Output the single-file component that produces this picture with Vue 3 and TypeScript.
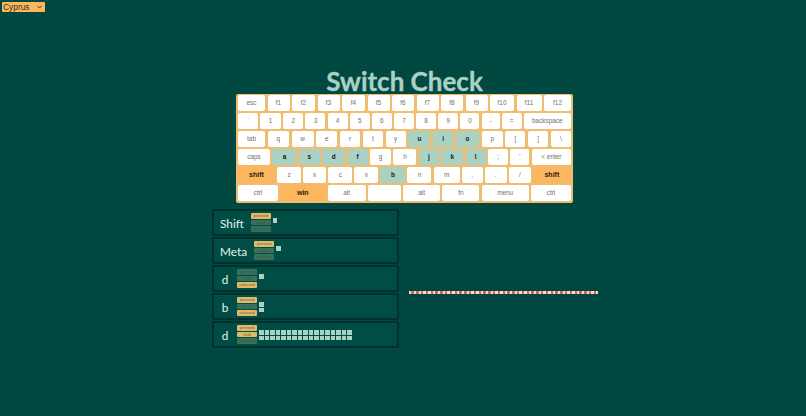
<script setup lang="ts">
interface Key { t: string; w: number; s?: 'on' | 'mod' }
const k = (t: string, w: number, s?: 'on' | 'mod'): Key => ({ t, w, s })
const keyRows: Key[][] = [
  [k('esc', 27), k('f1', 22), k('f2', 23), k('f3', 22), k('f4', 23), k('f5', 22), k('f6', 22), k('f7', 22), k('f8', 22), k('f9', 22), k('f10', 24), k('f11', 25), k('f12', 27)],
  [k('`', 20), k('1', 21), k('2', 20), k('3', 20), k('4', 20), k('5', 20), k('6', 20), k('7', 20), k('8', 20), k('9', 20), k('0', 19), k('-', 18), k('=', 20), k('backspace', 47)],
  [k('tab', 27), k('q', 21), k('w', 22), k('e', 21), k('r', 20), k('t', 20), k('y', 20), k('u', 22, 'on'), k('i', 20, 'on'), k('o', 23, 'on'), k('p', 21), k('[', 20), k(']', 20), k('\\', 20)],
  [k('caps', 32), k('a', 24, 'on'), k('s', 21, 'on'), k('d', 23, 'on'), k('f', 20, 'on'), k('g', 21), k('h', 23), k('j', 20, 'on'), k('k', 22, 'on'), k('l', 20, 'on'), k(';', 20), k("'", 19), k('< enter', 39)],
  [k('shift', 37, 'mod'), k('z', 24), k('x', 23), k('c', 24), k('v', 24), k('b', 25, 'on'), k('n', 24), k('m', 26), k(',', 21), k('.', 22), k('/', 22), k('shift', 38, 'mod')],
  [k('ctrl', 40), k('win', 45, 'mod'), k('alt', 38), k('', 33), k('alt', 37), k('fn', 37), k('menu', 47), k('ctrl', 40)],
]

interface Ev { label: string; on: boolean[]; dots: number }
const events: Ev[] = [
  { label: 'Shift', on: [true, false, false], dots: 1 },
  { label: 'Meta', on: [true, false, false], dots: 1 },
  { label: 'd', on: [false, false, true], dots: 1 },
  { label: 'b', on: [true, false, true], dots: 2 },
  { label: 'd', on: [true, true, false], dots: 34 },
]
const states = ['pressed', 'held', 'released']
</script>

<template>
  <main class="page">
    <div class="picker">
      <select class="layout">
        <option>Cyprus</option>
      </select>
      <svg class="chev" width="5" height="4" viewBox="0 0 5 4"><path d="M.5 1 2.5 3 4.5 1" fill="none" stroke="#4a3a1c" stroke-width="1" /></svg>
    </div>
    <h1 class="title">Switch Check</h1>
    <section class="keyboard">
      <div v-for="(row, r) in keyRows" :key="r" class="key-row">
        <div
          v-for="(key, i) in row"
          :key="i"
          class="key"
          :class="key.s"
          :style="{ width: key.w + 'px' }"
        >{{ key.t }}</div>
      </div>
    </section>
    <section class="lower">
      <div class="events">
        <div v-for="(ev, i) in events" :key="i" class="event">
          <span class="label">{{ ev.label }}</span>
          <div class="stack">
            <span
              v-for="(s, j) in states"
              :key="s"
              class="state"
              :class="{ lit: ev.on[j] }"
            >{{ s }}</span>
          </div>
          <div class="dots">
            <i v-for="n in ev.dots" :key="n" class="dot"></i>
          </div>
        </div>
      </div>
      <div class="timing">
        <div class="line"></div>
      </div>
    </section>
  </main>
</template>

<style scoped>
.page {
  box-sizing: border-box;
  width: 806px;
  height: 416px;
  padding-left: 3px;
  background: #004840;
  overflow: hidden;
  display: flex;
  flex-direction: column;
  align-items: center;
}
.picker {
  align-self: flex-start;
  position: relative;
  margin: 2px 0 0 -1px;
  width: 43px;
  height: 10px;
}
.layout {
  display: block;
  appearance: none;
  width: 43px;
  height: 10px;
  padding: 0 0 0 1px;
  border: 0;
  border-radius: 1px;
  background-color: #fbb65e;
  color: #3a3320;
  font: 8.4px/10px "Liberation Sans", Arial, sans-serif;
}
.chev {
  position: absolute;
  right: 3px;
  top: 3px;
}
.title {
  margin: 56px 0 0;
  height: 26px;
  color: #a9d1c4;
  font: 700 26px/27px Lato, sans-serif;
  -webkit-text-stroke: 0.35px #a9d1c4;
  white-space: nowrap;
}
.keyboard {
  box-sizing: border-box;
  width: 337px;
  height: 109px;
  padding: 1px 2px 0;
  background: #efbd72;
  border-radius: 2px;
  display: flex;
  flex-direction: column;
  gap: 2px;
}
.key-row {
  display: flex;
  justify-content: space-between;
  height: 16px;
}
.key {
  background: #fff;
  border-radius: 2px;
  color: #707070;
  font: 6.4px/16px "Liberation Sans", Arial, sans-serif;
  text-align: center;
  white-space: nowrap;
}
.key.on {
  background: #a9d1c4;
  color: #10201c;
  font-weight: 700;
}
.key.mod {
  background: #fbb65e;
  color: #2a2010;
  font-weight: 700;
  font-size: 7px;
}
.lower {
  display: flex;
  gap: 10px;
  width: 386px;
  margin: 6px 0 0 1px;
}
.events {
  width: 187px;
  flex: none;
  display: flex;
  flex-direction: column;
  gap: 1px;
}
.event {
  box-sizing: border-box;
  height: 27px;
  display: flex;
  align-items: center;
  gap: 6px;
  padding-left: 5px;
  border: 2px solid #00312c;
  border-radius: 2px;
  background: #004d45;
}
.label {
  min-width: 10px;
  padding: 2px 1px 0;
  color: #e4f3ee;
  font: 11.8px/1 Lato, sans-serif;
  text-align: center;
}
.stack {
  width: 20px;
  display: flex;
  flex-direction: column;
  gap: 1px;
}
.state {
  height: 5.6px;
  border-radius: 1px;
  background: #3a6f5a;
  color: #2c5f4c;
  font: 4px/5.6px "Liberation Sans", Arial, sans-serif;
  text-align: center;
  overflow: hidden;
}
.state.lit {
  background: #e0b96a;
  color: #7a6030;
}
.dots {
  align-self: flex-start;
  margin: 7px 0 0 -4px;
  height: 11px;
  display: grid;
  grid-template-rows: repeat(2, 5.5px);
  grid-auto-columns: 5.5px;
  grid-auto-flow: column;
}
.dot {
  display: block;
  width: 4.6px;
  height: 4.6px;
  background: #a9d1c4;
}
.timing {
  flex: none;
  padding-top: 82px;
}
.line {
  width: 189px;
  height: 3px;
  background: repeating-linear-gradient(90deg, #f4dccc 0 2.4px, #dc5f6c 2.4px 4.8px);
}
</style>
